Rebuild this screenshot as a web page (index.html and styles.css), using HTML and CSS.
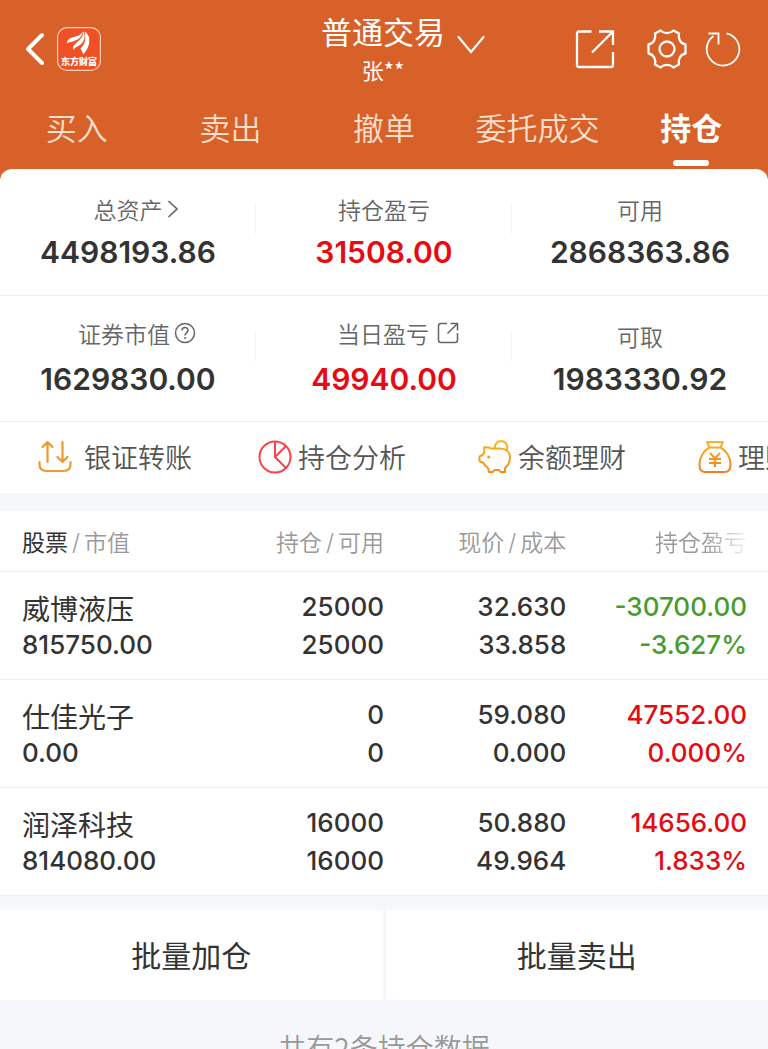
FILE: index.html
```html
<!DOCTYPE html>
<html lang="zh-CN">
<head>
<meta charset="utf-8">
<meta name="viewport" content="width=device-width, initial-scale=1">
<title>普通交易 - 持仓</title>
<link rel="stylesheet" href="styles.css">
</head>
<body>
<div class="app">
  <header class="header">
    <div class="topbar">
      <div class="topbar-left">
        <button class="icon-btn" aria-label="返回">
          <svg width="20" height="34" viewBox="0 0 20 34" fill="none" stroke="#fff" stroke-width="4" stroke-linecap="round" stroke-linejoin="round"><path d="M17 3 3 17 17 31"/></svg>
        </button>
        <svg class="logo" width="44" height="44" viewBox="0 0 44 44" role="img" aria-label="东方财富">
          <rect x="0.600" y="0.600" width="42.800" height="42.800" rx="9.500" fill="#f05026" stroke="#fbd3bd" stroke-width="1.200"/>
          <g fill="#fff">
            <path d="M10 16.500C9.500 11 16 10.500 20 9C23 8 24.500 6.500 25.500 4.500C25.800 10 20.500 13 16 14.500C13 15.300 11 15.300 10 16.500Z"/>
            <path d="M16.500 23C15 18.500 19 16 22 13.500C25 11 26 8 26.500 4.500C28.800 9 27.500 14.500 23 18C20 20 17.500 20.500 16.500 23Z"/>
            <path d="M27.500 4.500C32 7 33 12 32 17C31 21.500 28.500 25 26 27.500C26 24.500 24 23.500 23.500 21.500C27.500 18 29.500 12 27.500 4.500Z"/>
          </g>
          <text class="logo-text" x="22" y="38" text-anchor="middle">东方财富</text>
        </svg>
      </div>
      <div class="account">
        <h1 class="account-title">普通交易</h1>
        <span class="account-name">张**</span>
      </div>
      <div class="topbar-right">
        <button class="icon-btn switch" aria-label="切换账户">
          <svg width="28" height="20" viewBox="0 0 28 20" fill="none" stroke="#fff" stroke-width="2.200" stroke-linecap="round"><path d="M1.500 2 14 17 26.500 2"/></svg>
        </button>
        <div class="tools">
          <button class="icon-btn" aria-label="分享">
            <svg width="40" height="40" viewBox="0 0 40 40" fill="none" stroke="#fff" stroke-width="2.300"><path d="M16.500 2.500H4Q2 2.500 2 4.500V36Q2 38 4 38H36Q38 38 38 36V23M24 2.500H38V16M38 2.500 17 23.500"/></svg>
          </button>
          <button class="icon-btn gear" aria-label="设置">
            <svg width="40" height="40" viewBox="0 0 40 40" fill="none" stroke="#fff" stroke-width="2.300" stroke-linejoin="round"><path d="M13.500 1.500C17 5 23 5 26.500 1.500L32 4.500C31 9.500 33 14.500 38.500 15.500V24.500C33 25.500 31 30.500 32 35.500L26.500 38.500C23 35 17 35 13.500 38.500L8 35.500C9 30.500 7 25.500 1.500 24.500V15.500C7 14.500 9 9.500 8 4.500Z"/><circle cx="20" cy="20" r="7.500"/></svg>
          </button>
          <button class="icon-btn" aria-label="刷新">
            <svg width="36" height="36" viewBox="0 0 36 36" fill="none" stroke="#fff" stroke-width="1.800"><path d="M21.500 2.300A16.300 16.300 0 1 1 8.500 5M3.500 2.500H13.500V13.500"/></svg>
          </button>
        </div>
      </div>
    </div>
    <nav class="tabs">
      <a class="tab" href="#buy">买入</a>
      <a class="tab" href="#sell">卖出</a>
      <a class="tab" href="#cancel">撤单</a>
      <a class="tab" href="#orders">委托成交</a>
      <a class="tab tab-active" href="#positions" aria-current="page">持仓</a>
    </nav>
  </header>

  <main>
    <section class="summary">
      <div class="summary-row">
        <div class="metric">
          <a class="metric-label with-arrow" href="#assets">总资产<svg width="12" height="20" viewBox="0 0 12 20" fill="none" stroke="#666" stroke-width="1.700"><path d="M1.500 2 10 10 1.500 18"/></svg></a>
          <strong class="metric-value">4498193.86</strong>
        </div>
        <div class="metric">
          <span class="metric-label">持仓盈亏</span>
          <strong class="metric-value up">31508.00</strong>
        </div>
        <div class="metric">
          <span class="metric-label">可用</span>
          <strong class="metric-value">2868363.86</strong>
        </div>
      </div>
      <div class="summary-row">
        <div class="metric">
          <span class="metric-label with-icon">证券市值<svg width="22" height="22" viewBox="0 0 22 22" fill="none" stroke="#666" stroke-width="1.500"><circle cx="11" cy="11" r="9.500"/><path d="M8 8.500C8 4.500 14 4.500 14 8.300C14 10.500 11 10.800 11 13.500"/><path d="M11 15V17"/></svg></span>
          <strong class="metric-value">1629830.00</strong>
        </div>
        <div class="metric">
          <a class="metric-label with-icon with-link" href="#today">当日盈亏<svg width="22" height="22" viewBox="0 0 22 22" fill="none" stroke="#666" stroke-width="1.500"><path d="M10 1.500H4Q1.500 1.500 1.500 4V18Q1.500 20.500 4 20.500H18Q20.500 20.500 20.500 18V11M13.500 1.500H20.500V8.500M20.500 1.500 10.500 11.500"/></svg></a>
          <strong class="metric-value up">49940.00</strong>
        </div>
        <div class="metric">
          <span class="metric-label">可取</span>
          <strong class="metric-value">1983330.92</strong>
        </div>
      </div>
    </section>

    <nav class="shortcuts">
      <a class="shortcut" href="#transfer">
        <svg width="40" height="34" viewBox="0 0 40 34" fill="none" stroke="#f0982d" stroke-width="2.200" stroke-linecap="round" stroke-linejoin="round"><path d="M9.500 22V2M4.500 7 9.500 2 14.500 7M24.500 2V22M19.500 17 24.500 22 29.500 17M1.500 22V24Q1.500 31 8.500 31H25.500Q32.500 31 32.500 24V22"/></svg>
        银证转账
      </a>
      <a class="shortcut" href="#analysis">
        <svg width="34" height="34" viewBox="0 0 34 34" fill="none" stroke="#f5464c" stroke-width="2"><circle cx="17" cy="17" r="15.500"/><path d="M17 1.500V17L28 28M17 17 28 6"/></svg>
        持仓分析
      </a>
      <a class="shortcut" href="#balance">
        <svg width="34" height="34" viewBox="0 0 34 34" fill="none" stroke="url(#gold)" stroke-width="2" stroke-linejoin="round"><defs><linearGradient id="gold" x1="0" y1="0" x2="0" y2="34" gradientUnits="userSpaceOnUse"><stop offset="0" stop-color="#fcb817"/><stop offset="1" stop-color="#f58b16"/></linearGradient></defs><path d="M6 7.500 6.500 12Q5 15.500 1.500 16.500V21L5.500 23Q7 26 10 28L11 32H15L16.500 30H21L22.500 32H27V28Q32 24 32 17.500C32 12 28 8.500 22 8.500H13Q9.500 6.500 6 7.500Z"/><path d="M17 8.500A6.200 6.200 0 1 1 28 11"/><circle cx="10.800" cy="17" r="1.600" fill="#f89c17" stroke="none"/></svg>
        余额理财
      </a>
      <a class="shortcut" href="#products">
        <svg width="34" height="34" viewBox="0 0 34 34" fill="none" stroke="url(#bag)" stroke-width="2" stroke-linejoin="round"><defs><linearGradient id="bag" x1="0" y1="0" x2="0" y2="34" gradientUnits="userSpaceOnUse"><stop offset="0" stop-color="#fbb42a"/><stop offset="1" stop-color="#f17b20"/></linearGradient></defs><path d="M9 2H25L22.500 7.500H11.500ZM11.500 7.500C5 11 1.500 18 1.500 25Q1.500 32 7.500 32H26.500Q32.500 32 32.500 25C32.500 18 29 11 22.500 7.500"/><path d="M12 13 17 18.500 22 13M11 19H23M11 23H23M17 18.500V27"/></svg>
        理财
      </a>
    </nav>

    <section class="positions" id="positions">
      <table class="table">
        <colgroup><col class="col-name"><col class="col-qty"><col class="col-price"><col class="col-profit"></colgroup>
        <thead>
          <tr>
            <th scope="col"><b class="sorted">股票</b><i class="slash">/</i>市值</th>
            <th scope="col">持仓<i class="slash">/</i>可用</th>
            <th scope="col">现价<i class="slash">/</i>成本</th>
            <th scope="col"><span class="faded">持仓盈亏</span></th>
          </tr>
        </thead>
        <tbody>
          <tr>
            <td><span class="stock">威博液压</span><span class="line">815750.00</span></td>
            <td><span class="line">25000</span><span class="line">25000</span></td>
            <td><span class="line">32.630</span><span class="line">33.858</span></td>
            <td class="down"><span class="line">-30700.00</span><span class="line">-3.627%</span></td>
          </tr>
          <tr>
            <td><span class="stock">仕佳光子</span><span class="line">0.00</span></td>
            <td><span class="line">0</span><span class="line">0</span></td>
            <td><span class="line">59.080</span><span class="line">0.000</span></td>
            <td class="up"><span class="line">47552.00</span><span class="line">0.000%</span></td>
          </tr>
          <tr>
            <td><span class="stock">润泽科技</span><span class="line">814080.00</span></td>
            <td><span class="line">16000</span><span class="line">16000</span></td>
            <td><span class="line">50.880</span><span class="line">49.964</span></td>
            <td class="up"><span class="line">14656.00</span><span class="line">1.833%</span></td>
          </tr>
        </tbody>
      </table>
    </section>

    <div class="batch">
      <button class="batch-btn">批量加仓</button>
      <button class="batch-btn">批量卖出</button>
    </div>
    <p class="footnote">共有2条持仓数据</p>
  </main>
</div>
</body>
</html>
```

FILE: styles.css
```css
* {
  box-sizing: border-box;
}

body {
  margin: 0;
  background: #f6f7fa;
  color: #333;
  font-family: Inter, "Noto Sans CJK SC", sans-serif;
}

a {
  color: inherit;
  text-decoration: none;
}

button {
  border: 0;
  font: inherit;
  color: inherit;
  cursor: pointer;
}

svg {
  display: block;
  flex: none;
}

.app {
  height: 100vh;
  overflow-x: hidden;
  overflow-y: auto;
  scrollbar-width: none;
}

/* Header */
.header {
  padding: 13px 0 12px;
  background: #d86029;
  color: #fff;
}

.topbar {
  display: grid;
  grid-template-columns: 1fr auto 1fr;
  column-gap: 12px;
  align-items: center;
  height: 70px;
  padding: 0 27px 0 25px;
}

.topbar-left,
.topbar-right,
.tools {
  display: flex;
  align-items: center;
}

.topbar-left {
  gap: 12px;
}

.topbar-right {
  justify-content: space-between;
}

.icon-btn {
  padding: 0;
  background: none;
}

.switch {
  margin-bottom: 8px;
}

.gear {
  margin: 0 18px 0 32px;
}

.logo-text {
  font: 900 9px "Noto Sans CJK SC", sans-serif;
  fill: #fff;
}

.account {
  display: flex;
  flex-direction: column;
  align-items: center;
}

.account-title {
  margin: 0;
  font-size: 31px;
  font-weight: 400;
  line-height: 40px;
}

.account-name {
  font-family: "Noto Sans CJK SC", sans-serif;
  font-size: 22px;
  line-height: 32px;
}

.tabs {
  display: grid;
  grid-template-columns: repeat(5, 1fr);
  padding-top: 24px;
}

.tab {
  display: flex;
  flex-direction: column;
  align-items: center;
  height: 61px;
  color: #fadfcc;
  font-size: 31px;
  font-weight: 350;
  line-height: 44px;
}

.tab-active {
  color: #fff;
  font-weight: 700;
}

.tab-active::after {
  content: "";
  width: 36px;
  height: 6px;
  margin-top: 9px;
  border-radius: 3px;
  background: #fff;
}

/* Account summary */
.summary {
  margin-top: -11px;
  border-radius: 12px 12px 0 0;
  background: #fff;
}

.summary-row {
  display: grid;
  grid-template-columns: repeat(3, 1fr);
  height: 126px;
  padding-top: 21px;
  border-bottom: 1px solid #f1f1f3;
}

.summary-row:first-child {
  height: 127px;
}

.metric {
  display: flex;
  flex-direction: column;
  align-items: center;
  background: linear-gradient(#f4f4f6, #f4f4f6) right 14px / 1px 30px no-repeat;
}

.metric:last-child {
  background: none;
}

.metric-label {
  display: flex;
  align-items: center;
  gap: 4px;
  height: 40px;
  padding-bottom: 3px;
  color: #666;
  font-size: 23px;
  font-weight: 350;
}

.with-arrow {
  padding-left: 16px;
}

.with-icon {
  padding-bottom: 8px;
  padding-left: 18px;
}

.with-link {
  gap: 8px;
  padding-left: 28px;
}

.metric-value {
  font-size: 30px;
  font-weight: 600;
  line-height: 44px;
}

.up {
  color: #e60a12;
}

.down {
  color: #489b2d;
}

/* Shortcuts */
.shortcuts {
  display: grid;
  grid-auto-flow: column;
  grid-auto-columns: 220px;
  height: 71px;
  padding-left: 38px;
  overflow: hidden;
  background: #fff;
}

.shortcut {
  display: flex;
  align-items: center;
  gap: 6px;
  padding-bottom: 2px;
  color: #555;
  font-size: 27px;
  font-weight: 350;
  white-space: nowrap;
}

/* Positions */
.positions {
  margin-top: 18px;
  background: #fff;
}

.table {
  width: 100%;
  border-collapse: collapse;
  table-layout: fixed;
}

.col-name,
.col-qty {
  width: 25%;
}

.col-price {
  width: 24%;
}

.col-profit {
  width: 26%;
}

.table th,
.table td {
  padding: 0;
  border-bottom: 1px solid #f1f1f3;
  text-align: right;
}

.table th {
  height: 60px;
  color: #999;
  font-size: 23px;
  font-weight: 350;
}

.table th:first-child,
.table td:first-child {
  padding-left: 22px;
  text-align: left;
}

.table th:nth-child(3),
.table td:nth-child(3) {
  padding-right: 2px;
}

.table th:last-child,
.table td:last-child {
  padding-right: 21px;
}

.table td {
  height: 108px;
  padding-top: 2px;
  font-size: 26px;
  font-weight: 500;
}

.sorted {
  color: #333;
  font-weight: 400;
}

.slash {
  padding: 0 4px;
  font-style: normal;
}

.faded {
  -webkit-mask-image: linear-gradient(90deg, #000 55%, transparent 105%);
  mask-image: linear-gradient(90deg, #000 55%, transparent 105%);
}

.line,
.stock {
  display: block;
  height: 38px;
  line-height: 38px;
}

.stock {
  font-size: 28px;
  font-weight: 400;
  line-height: 44px;
}

/* Batch actions */
.batch {
  display: grid;
  grid-template-columns: 1fr 1fr;
  gap: 3px;
  margin-top: 14px;
}

.batch-btn {
  height: 90px;
  padding: 0 0 2px;
  background: #fff;
  font-size: 30px;
}

.footnote {
  margin: 0;
  padding: 25px 0 24px;
  color: #999;
  font-family: "Noto Sans CJK SC", sans-serif;
  font-size: 28px;
  font-weight: 350;
  line-height: 44px;
  text-align: center;
}
```
